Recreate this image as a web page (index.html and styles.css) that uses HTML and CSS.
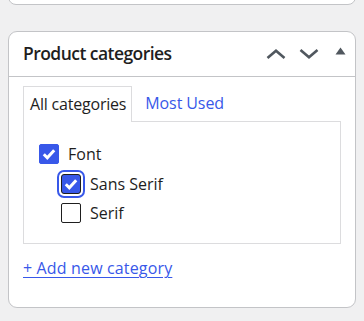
FILE: index.html
```html
<!DOCTYPE html>
<html>
<head>
<meta charset="utf-8">
<link rel="stylesheet" href="styles.css">
</head>
<body>
<div class="page">
  <div class="prev-card"></div>
  <div class="card">
    <div class="card-header">
      <h2 class="card-title">Product categories</h2>
      <div class="actions">
        <button class="act"><svg width="20" height="10" viewBox="0 0 20 10"><polyline points="1.5,9 10,1.8 18.5,9" fill="none" stroke="#50575e" stroke-width="2.6"/></svg></button>
        <button class="act"><svg width="20" height="10" viewBox="0 0 20 10"><polyline points="1.5,1 10,8.2 18.5,1" fill="none" stroke="#50575e" stroke-width="2.6"/></svg></button>
        <button class="act act-tri"><svg width="11" height="8" viewBox="0 0 11 8"><polygon points="5.5,0.5 10.5,7.5 0.5,7.5" fill="#50575e"/></svg></button>
      </div>
    </div>
    <div class="card-body">
      <div class="tabs">
        <span class="tab tab-active">All categories</span>
        <span class="tab tab-link">Most Used</span>
      </div>
      <div class="panel">
        <ul class="checklist">
          <li class="item">
            <span class="cb cb-checked"><svg width="14" height="12" viewBox="0 0 14 12"><polyline points="1.8,6.3 5.3,9.8 12.2,2.2" fill="none" stroke="#fff" stroke-width="3"/></svg></span>
            <span class="label">Font</span>
          </li>
          <li class="item item-child">
            <span class="cb cb-checked cb-focus"><svg width="14" height="12" viewBox="0 0 14 12"><polyline points="1.8,6.3 5.3,9.8 12.2,2.2" fill="none" stroke="#fff" stroke-width="3"/></svg></span>
            <span class="label">Sans Serif</span>
          </li>
          <li class="item item-child">
            <span class="cb"></span>
            <span class="label">Serif</span>
          </li>
        </ul>
      </div>
      <a class="add-link" href="#">+ Add new category</a>
    </div>
  </div>
</div>
</body>
</html>
```

FILE: styles.css
```css
html, body {
  margin: 0;
  padding: 0;
  background: #f0f0f1;
}
body {
  font-family: "Open Sans", "Noto Sans", sans-serif;
  color: #1e1e1e;
}
.page {
  padding: 0 8px;
}
.prev-card {
  height: 23px;
  margin-top: -20px;
  background: #fff;
  border: 1px solid #c3c4c7;
  border-radius: 8px;
}
.card {
  margin-top: 26px;
  background: #fff;
  border: 1px solid #c3c4c7;
  border-radius: 9px;
}
.card-header {
  display: flex;
  align-items: center;
  height: 44px;
  border-bottom: 1px solid #c3c4c7;
  padding: 0 0 0 14px;
}
.card-title {
  margin: 0;
  flex: 1;
  font-size: 17.5px;
  font-weight: 600;
  letter-spacing: -0.55px;
  line-height: 1;
}
.actions {
  display: flex;
  align-items: center;
}
.act {
  border: 0;
  background: none;
  padding: 0;
  margin: 0;
  width: 33px;
  height: 32px;
  display: flex;
  align-items: center;
  justify-content: center;
}
.act-tri {
  width: 30px;
  padding-bottom: 6px;
}
.card-body {
  padding: 9px 14px 0;
}
.tabs {
  display: flex;
  align-items: flex-end;
  font-size: 16px;
  height: 35px;
}
.tab {
  line-height: 20px;
}
.tab-active {
  border: 1px solid #dcdcde;
  border-bottom: 0;
  background: #fff;
  padding: 7px 5px 8px 6px;
  margin-bottom: -1px;
  position: relative;
  z-index: 1;
  letter-spacing: -0.2px;
}
.tab-link {
  color: #3858e9;
  margin-left: 13px;
  padding-bottom: 8px;
  letter-spacing: -0.1px;
}
.panel {
  border: 1px solid #dcdcde;
  padding: 22px 15px 20px;
}
.checklist {
  list-style: none;
  margin: 0;
  padding: 0;
  display: flex;
  flex-direction: column;
  gap: 9.5px;
}
.item {
  display: flex;
  align-items: center;
  height: 20px;
  font-size: 16px;
}
.item-child {
  padding-left: 22px;
}
.cb {
  box-sizing: border-box;
  width: 20px;
  height: 20px;
  border: 1px solid #1e1e1e;
  border-radius: 2px;
  background: #fff;
  display: flex;
  align-items: center;
  justify-content: center;
  flex: none;
}
.cb-checked {
  background: #3858e9;
  border-color: #3858e9;
}
.cb-focus {
  border-color: #1e1e1e;
  box-shadow: 0 0 0 2px #fff, 0 0 0 4px #3858e9;
  border-radius: 3px;
}
.label {
  margin-left: 9px;
}
.add-link {
  display: inline-block;
  margin: 14px 0 29px;
  color: #3858e9;
  font-size: 16px;
  letter-spacing: 0.15px;
  text-decoration: underline;
  text-underline-offset: 3px;
  line-height: 20px;
}
```
